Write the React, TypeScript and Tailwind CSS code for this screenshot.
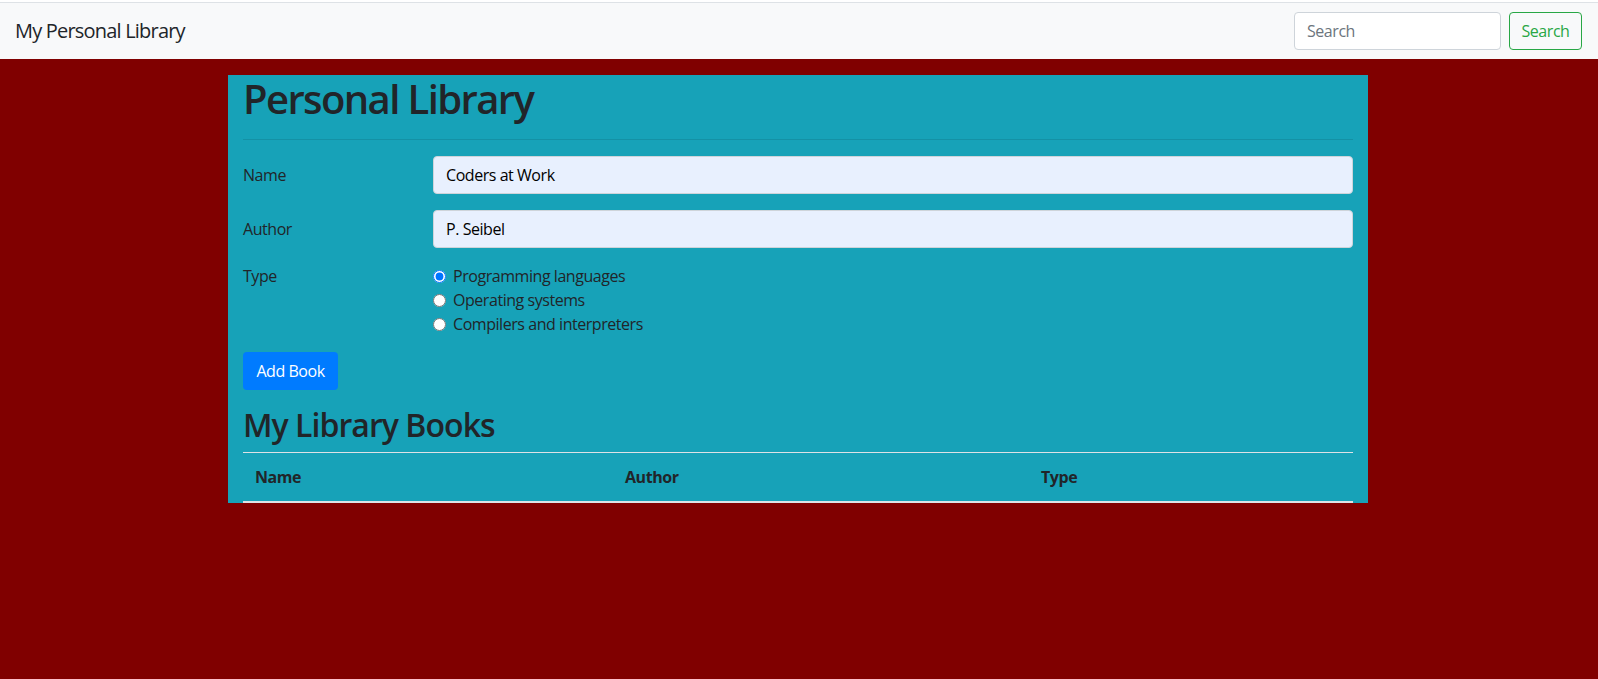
import { useState } from "react";

const types = [
  "Programming languages",
  "Operating systems",
  "Compilers and interpreters",
];

function FormRow({ label, value }: { label: string; value: string }) {
  return (
    <div className="mb-4 flex">
      <label className="w-[190px] shrink-0 pt-[7px] pb-[7px] leading-6">{label}</label>
      <input
        defaultValue={value}
        className="h-[38px] flex-1 rounded border border-[#ced4da] bg-[#e8f0fe] px-3 text-base text-black outline-none"
      />
    </div>
  );
}

export default function App() {
  const [type, setType] = useState(types[0]);

  return (
    <div className="min-h-screen bg-[#800000] font-['Open_Sans','Noto_Sans',sans-serif] text-base tracking-[-0.45px] text-[#212529]">
      <div className="h-[2px] bg-white" />
      <nav className="flex h-[57px] items-center justify-between border-t border-[#dee2e6] bg-[#f8f9fa] pr-4 pl-[15px]">
        <a className="text-xl leading-[30px] tracking-[-0.8px] text-[#212529]">My Personal Library</a>
        <form className="flex items-center gap-2" onSubmit={(e) => e.preventDefault()}>
          <input
            placeholder="Search"
            className="h-[38px] w-[207px] rounded border border-[#ced4da] bg-white px-3 text-base outline-none placeholder:text-[#6c757d]"
          />
          <button className="h-[38px] w-[73px] rounded border border-[#28a745] text-base text-[#28a745]">
            Search
          </button>
        </form>
      </nav>

      <div className="mx-auto mt-4 w-[1140px] -translate-x-px bg-[#17a2b8] px-[15px]">
        <h1 className="text-[40px] leading-[48px] font-semibold tracking-[-1.6px]">Personal Library</h1>
        <hr className="my-4 border-t border-[rgba(0,0,0,0.1)]" />

        <FormRow label="Name" value="Coders at Work" />
        <FormRow label="Author" value="P. Seibel" />

        <div className="mb-4 flex">
          <div className="w-[190px] shrink-0 leading-6">Type</div>
          <div className="flex flex-col">
            {types.map((t) => (
              <label key={t} className="flex items-center leading-6">
                <input
                  type="radio"
                  name="type"
                  checked={type === t}
                  onChange={() => setType(t)}
                  className="m-0 mr-[7px] h-[13px] w-[13px]"
                />
                {t}
              </label>
            ))}
          </div>
        </div>

        <button className="h-[38px] w-[95px] rounded bg-[#007bff] text-base text-white">Add Book</button>

        <h2 className="mt-4 mb-2 text-[32px] leading-[38px] font-semibold tracking-[-0.95px]">My Library Books</h2>
        <table className="w-full border-collapse text-left">
          <thead>
            <tr className="border-t border-b-2 border-t-[#dee2e6] border-b-[#dee2e6]">
              <th className="w-[370px] p-3 leading-6 font-bold">Name</th>
              <th className="w-[416px] p-3 leading-6 font-bold">Author</th>
              <th className="p-3 leading-6 font-bold">Type</th>
            </tr>
          </thead>
          <tbody />
        </table>
      </div>
    </div>
  );
}
